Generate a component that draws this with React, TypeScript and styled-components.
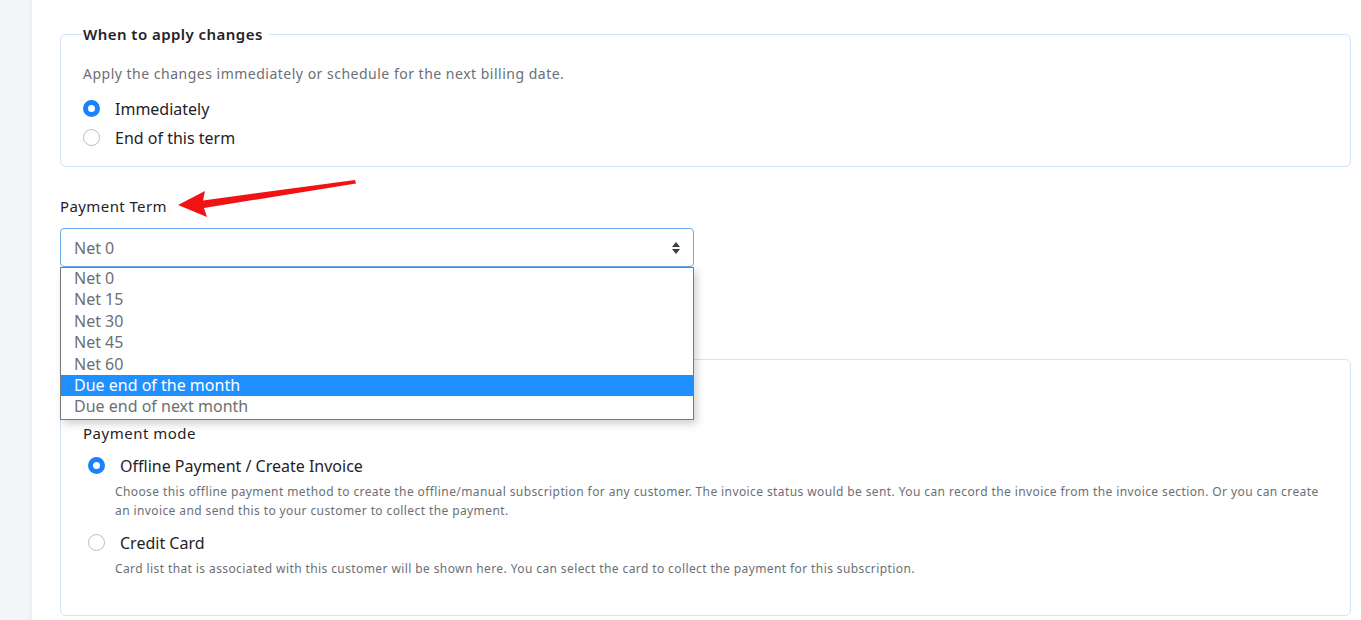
import styled, { createGlobalStyle } from "styled-components";

const GlobalStyle = createGlobalStyle`
  html, body {
    margin: 0;
    padding: 0;
    background: #ffffff;
  }
  body {
    font-family: "Noto Sans", "Open Sans", sans-serif;
    color: #1f2329;
  }
`;

const Page = styled.div`
  display: flex;
  height: 620px;
  overflow: hidden;
`;

const Sidebar = styled.div`
  width: 32px;
  flex-shrink: 0;
  background: #f3f6f9;
  box-shadow: inset -2px 0 3px rgba(0, 0, 0, 0.03);
`;

const Main = styled.main`
  flex: 1;
  padding: 24px 10px 0 28px;
  display: flex;
  flex-direction: column;
`;

const FieldSet = styled.fieldset`
  margin: 0;
  border: 1px solid #d3e1fb;
  border-radius: 6px;
  padding: 0 22px 14px 22px;
`;

const Legend = styled.legend`
  font-size: 15px;
  line-height: 20px;
  font-weight: 600;
  letter-spacing: 0.45px;
  color: #1f2329;
  padding: 0 6px 0 0;
`;

const Hint = styled.p`
  margin: 20px 0 10px;
  font-size: 14px;
  line-height: 20px;
  letter-spacing: 0.5px;
  color: #6b6f75;
`;

const RadioRow = styled.label<{ $inset?: boolean }>`
  display: flex;
  align-items: center;
  gap: 15px;
  padding-left: ${(p) => (p.$inset ? "5px" : "0")};
  height: 29px;
  font-size: 16px;
  color: #1f2329;
`;

const Dot = styled.span<{ $on?: boolean }>`
  width: 17px;
  height: 17px;
  border-radius: 50%;
  box-sizing: border-box;
  flex-shrink: 0;
  background: #ffffff;
  border: ${(p) => (p.$on ? "5px solid #1a82fb" : "1px solid #b9bdc4")};
`;

const TermBlock = styled.div`
  position: relative;
  margin-top: 29px;
  width: 634px;
`;

const FieldLabel = styled.div`
  font-size: 15px;
  line-height: 20px;
  letter-spacing: 0.4px;
  color: #1f2329;
  margin-bottom: 12px;
`;

const Select = styled.div`
  height: 39px;
  box-sizing: border-box;
  border: 1px solid #6aa8ea;
  border-radius: 4px;
  display: flex;
  align-items: center;
  justify-content: space-between;
  padding: 0 12px 0 13px;
  font-size: 16px;
  color: #6b6f75;
`;

const ListBox = styled.ul`
  position: absolute;
  left: 0;
  right: 0;
  top: 71px;
  margin: 0;
  padding: 0 0 1px;
  list-style: none;
  background: #ffffff;
  border: 1px solid #7a7a7a;
  box-shadow: 3px 4px 8px rgba(0, 0, 0, 0.18);
  z-index: 2;
`;

const Option = styled.li<{ $active?: boolean }>`
  height: 21.4px;
  line-height: 21px;
  padding-left: 13px;
  font-size: 16px;
  color: ${(p) => (p.$active ? "#ffffff" : "#6d6f73")};
  background: ${(p) => (p.$active ? "#1e90ff" : "transparent")};
`;

const Arrow = styled.svg`
  position: absolute;
  left: 118px;
  top: -16px;
  pointer-events: none;
`;

const ModeSet = styled(FieldSet)`
  margin-top: 92px;
  padding-top: 63px;
  padding-bottom: 29px;
`;

const ModeTitle = styled.div`
  font-size: 15px;
  line-height: 20px;
  letter-spacing: 0.5px;
  color: #1f2329;
  margin-bottom: 8px;
`;

const Note = styled.p`
  margin: 2px 0 8px 32px;
  font-size: 12px;
  line-height: 19px;
  letter-spacing: 0.4px;
  color: #6b6f75;
`;

const options = [
  "Net 0",
  "Net 15",
  "Net 30",
  "Net 45",
  "Net 60",
  "Due end of the month",
  "Due end of next month",
];

export default function App() {
  return (
    <Page>
      <GlobalStyle />
      <Sidebar />
      <Main>
        <FieldSet>
          <Legend>When to apply changes</Legend>
          <Hint>Apply the changes immediately or schedule for the next billing date.</Hint>
          <RadioRow>
            <Dot $on />
            Immediately
          </RadioRow>
          <RadioRow>
            <Dot />
            End of this term
          </RadioRow>
        </FieldSet>

        <TermBlock>
          <FieldLabel>Payment Term</FieldLabel>
          <Arrow width="200" height="40" viewBox="0 0 200 40">
            <path d="M0 25 L27 11 L25 20.5 L177 0 L178 3.5 L26 28 L29 37 Z" fill="#f11313" />
          </Arrow>
          <Select>
            Net 0
            <svg width="10" height="14" viewBox="0 0 10 14">
              <path d="M5 1 L9 6 H1 Z M1 8 H9 L5 13 Z" fill="#3a3d42" />
            </svg>
          </Select>
          <ListBox>
            {options.map((o, i) => (
              <Option key={o} $active={i === 5}>
                {o}
              </Option>
            ))}
          </ListBox>
        </TermBlock>

        <ModeSet>
          <ModeTitle>Payment mode</ModeTitle>
          <RadioRow $inset>
            <Dot $on />
            Offline Payment / Create Invoice
          </RadioRow>
          <Note>
            Choose this offline payment method to create the offline/manual subscription for any
            customer. The invoice status would be sent. You can record the invoice from the invoice
            section. Or you can create an invoice and send this to your customer to collect the
            payment.
          </Note>
          <RadioRow $inset>
            <Dot />
            Credit Card
          </RadioRow>
          <Note>
            Card list that is associated with this customer will be shown here. You can select the
            card to collect the payment for this subscription.
          </Note>
        </ModeSet>
      </Main>
    </Page>
  );
}
